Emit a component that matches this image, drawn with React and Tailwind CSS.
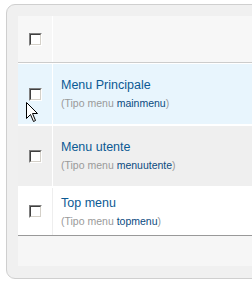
import React from "react";

function Checkbox() {
  return (
    <div className="w-[13px] h-[13px] border border-t-[#808080] border-l-[#808080] border-b-white border-r-white">
      <div className="w-full h-full bg-white border border-t-[#404040] border-l-[#404040] border-b-[#d4d0c8] border-r-[#d4d0c8]" />
    </div>
  );
}

function Row({ title, type, bg, divider, height, bottom }) {
  return (
    <div className={`flex ${bg} ${height} ${bottom}`}>
      <div className={`w-[35px] flex items-center justify-center border-r ${divider} pl-[1px]`}>
        <Checkbox />
      </div>
      <div className="flex flex-col justify-center pl-[8px]">
        <div className="text-[12.5px] leading-[15px] text-[#0b5a94]">{title}</div>
        <div className="text-[10.5px] leading-[13px] mt-[4px] text-[#9a9a9a]">
          (Tipo menu <span className="text-[#0a4a80]">{type}</span>)
        </div>
      </div>
    </div>
  );
}

export default function App() {
  return (
    <div
      className="relative w-[252px] h-[288px] overflow-hidden bg-white"
      style={{ fontFamily: '"Liberation Sans", Arial, sans-serif' }}
    >
      <div className="ml-[6px] mt-[4px] w-[320px] h-[275px] rounded-[9px] border border-[#cfcfcf] bg-[#f0f0f0] pt-[11px] pl-[11px]">
        <div className="w-[320px]">
          <div className="flex h-[47px] bg-[#f7f7f7] border-b border-[#cccccc]">
            <div className="w-[35px] flex items-center justify-center border-r border-white pl-[1px]">
              <Checkbox />
            </div>
            <div className="flex-1" />
          </div>
          <div className="h-[1px] bg-white" />
          <Row title="Menu Principale" type="mainmenu" bg="bg-[#e8f5fd]" divider="border-white" height="h-[62px]" bottom="border-b-2 border-white" />
          <Row title="Menu utente" type="menuutente" bg="bg-[#efefef]" divider="border-white" height="h-[62px]" bottom="border-b-2 border-white" />
          <Row title="Top menu" type="topmenu" bg="bg-white" divider="border-[#eeeeee]" height="h-[48px]" bottom="border-b border-[#999999]" />
          <div className="h-[30px] bg-[#f6f6f6]" />
        </div>
      </div>
      <svg className="absolute left-[26px] top-[102px]" width="13" height="21" viewBox="0 0 13 21">
        <path
          d="M0.5 0.5 L0.5 16.5 L4.5 12.5 L7.5 19.5 L9.5 18.5 L6.5 11.5 L11.5 11.5 Z"
          fill="white"
          stroke="black"
          strokeWidth="1"
          strokeLinejoin="miter"
        />
      </svg>
    </div>
  );
}
